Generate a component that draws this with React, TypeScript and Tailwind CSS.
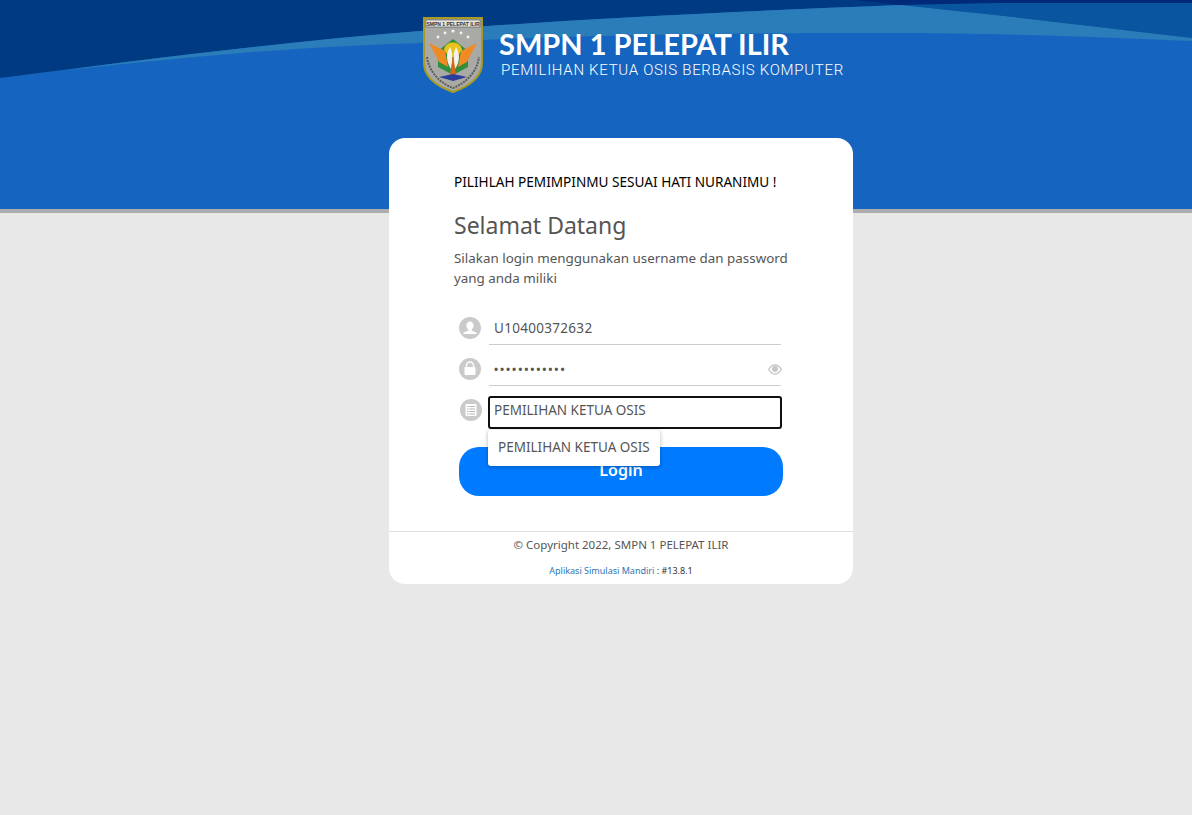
const Logo = () => (
  <svg width="60" height="76" viewBox="0 0 60 76">
    <path d="M1 1H59V46C59 62 44 70 30 75C16 70 1 62 1 46Z" fill="#a9a9a5" stroke="#a89a24" strokeWidth="2" />
    <rect x="3" y="3" width="54" height="7" fill="#e4e4e0" stroke="#3a3a3a" strokeWidth="0.5" />
    <text x="30" y="8.500" textAnchor="middle" fontSize="5" fontWeight="700" fill="#333333" fontFamily="Liberation Sans, sans-serif">SMPN 1 PELEPAT ILIR</text>
    <circle cx="15" cy="20" r="1.400" fill="#f2f2f2" />
    <circle cx="22" cy="16" r="1.400" fill="#f2f2f2" />
    <circle cx="30" cy="14" r="1.600" fill="#f2f2f2" />
    <circle cx="38" cy="16" r="1.400" fill="#f2f2f2" />
    <circle cx="45" cy="20" r="1.400" fill="#f2f2f2" />
    <path d="M15 34L30 22L45 34V50L30 58L15 50Z" fill="#2f8f3c" />
    <path d="M6 26L22 34L25 50L16 45L12 37Z" fill="#f08a24" />
    <path d="M54 26L38 34L35 50L44 45L48 37Z" fill="#f08a24" />
    <path d="M21 33C22 23 38 23 39 33L34 40H26Z" fill="#e8c21c" />
    <path d="M27 30C22 38 24 46 28 52C30 44 30 36 27 30Z" fill="#f6f2ea" />
    <path d="M33 30C38 38 36 46 32 52C30 44 30 36 33 30Z" fill="#f6f2ea" />
    <path d="M30 38L33 58H27Z" fill="#d9661a" />
    <path d="M16 60L30 57L44 60L30 64Z" fill="#2a3f9a" />
    <path d="M4 40C6 55 17 66 30 71C43 66 54 55 56 40" fill="none" stroke="#5c5c58" strokeWidth="2" strokeDasharray="2 1" />
  </svg>
);

const UserBadge = () => (
  <svg width="22" height="22" viewBox="0 0 22 22">
    <circle cx="11" cy="11" r="11" fill="#cacaca" />
    <path d="M11 4.500c-2.200 0-3.600 1.700-3.600 4 0 1.700.8 3.100 1.800 3.800v1.200L5 15.600c-.5.3-.8.7-.9 1.400h13.800c-.1-.7-.4-1.100-.9-1.400l-4.200-2.100v-1.200c1-.7 1.800-2.100 1.800-3.800 0-2.300-1.400-4-3.600-4z" fill="#fff" />
  </svg>
);

const LockBadge = () => (
  <svg width="22" height="22" viewBox="0 0 22 22">
    <circle cx="11" cy="11" r="11" fill="#cacaca" />
    <path d="M7.500 9V7.500a3.500 3.500 0 0 1 7 0V9" fill="none" stroke="#fff" strokeWidth="1.400" />
    <rect x="5.500" y="9" width="11" height="8" rx="1" fill="#fff" />
  </svg>
);

const ListBadge = () => (
  <svg width="22" height="22" viewBox="0 0 22 22">
    <circle cx="11" cy="11" r="11" fill="#cacaca" />
    <rect x="5.500" y="5" width="11" height="12" rx="1" fill="#fff" />
    <path d="M7 7.500h1.500M9.500 7.500h5.500M7 10h1.500M9.500 10h5.500M7 12.500h1.500M9.500 12.500h5.500M7 15h1.500M9.500 15h5.500" stroke="#b5b5b5" strokeWidth="1.200" />
  </svg>
);

const EyeIcon = () => (
  <svg width="14" height="11" viewBox="0 0 14 11" className="-mr-[1px]">
    <path d="M.7 5.500C2.300 2.700 4.500 1 7 1s4.700 1.700 6.300 4.500C11.700 8.300 9.500 10 7 10S2.300 8.300.7 5.500z" fill="#fff" stroke="#c8c8c8" strokeWidth="1.400" />
    <circle cx="7" cy="5" r="3" fill="#c8c8c8" />
  </svg>
);

const App = () => {
  return (
    <div className="min-h-[815px] bg-[#e8e8e8] font-['Noto_Sans','Open_Sans',sans-serif]">
      <header className="relative h-[213px] overflow-hidden border-b-4 border-[#adadb0] bg-[#1565c0]">
        <svg className="absolute inset-0" width="1192" height="209" viewBox="0 0 1192 209">
          <path d="M0 0H1192V40L900 5C720 12 560 20 420 31C280 42 140 60 0 78Z" fill="#003a82" />
          <path d="M855 0H1192V3H1000L900 5Z" fill="#002a78" />
          <path d="M900 5L1000 3H1192V38C1100 27 1000 15 900 5Z" fill="#0a55a0" />
          <path d="M0 78C140 60 280 42 420 31C560 20 720 12 900 5C1000 15 1100 27 1192 38V41C1100 37 1000 33 880 33C700 33 540 36 420 43C280 47 140 61 0 78Z" fill="#2a7db8" />
        </svg>
        <div className="relative flex items-start gap-[16px] pl-[423px] pt-[17px]">
          <Logo />
          <div className="pt-[10px] text-white">
            <div className="font-['Lato',sans-serif] text-[29px] font-bold leading-[34px]">SMPN 1 PELEPAT ILIR</div>
            <div className="mt-[1px] whitespace-nowrap pl-[2px] font-['Roboto',sans-serif] text-[15px] font-light leading-[16px] tracking-[0.700px]">
              PEMILIHAN KETUA OSIS BERBASIS KOMPUTER
            </div>
          </div>
        </div>
      </header>

      <main className="relative -mt-[75px] ml-[389px] w-[464px] rounded-[16px] bg-white">
        <div className="pl-[65px] pr-[60px] pt-[35px]">
          <p className="text-[13.600px] leading-[18px] text-black">PILIHLAH PEMIMPINMU SESUAI HATI NURANIMU !</p>
          <h1 className="mt-[18px] text-[23px] leading-[32px] text-[#555555]">Selamat Datang</h1>
          <p className="mt-[7px] text-[13.400px] leading-[20px] text-[#555555]">
            Silakan login menggunakan username dan password yang anda miliki
          </p>

          <div className="mt-[19px] flex h-[41px] items-start pl-[5px]">
            <div className="pt-[10px]"><UserBadge /></div>
            <div className="ml-[8px] flex h-[38px] w-[292px] items-center border-b border-[#cccccc] pl-[5px] pt-[6px] text-[13.500px] tracking-[0.300px] text-[#555555]">
              U10400372632
            </div>
          </div>
          <div className="flex h-[41px] items-start pl-[5px]">
            <div className="pt-[10px]"><LockBadge /></div>
            <div className="ml-[8px] flex h-[38px] w-[292px] items-center justify-between border-b border-[#cccccc] pl-[5px] pt-[6px] text-[#555555]">
              <span className="text-[11px] font-bold tracking-[1.900px]">••••••••••••</span>
              <EyeIcon />
            </div>
          </div>
          <div className="relative mt-[7px] flex h-[33px] items-start pl-[6px]">
            <div className="mt-[3px]"><ListBadge /></div>
            <div className="ml-[6px] flex h-[33px] w-[294px] items-center rounded-[3px] border-2 border-[#101010] pb-[4px] pl-[4px] text-[13.500px] text-[#555555]">
              PEMILIHAN KETUA OSIS
            </div>
            <div className="absolute left-[34px] top-[34px] z-10 flex h-[36px] w-[172px] items-center rounded-[3px] bg-white pb-[1px] pl-[10px] text-[13.500px] text-[#555555] shadow-[0_1px_4px_rgba(0,0,0,0.3)]">
              PEMILIHAN KETUA OSIS
            </div>
          </div>

          <button className="ml-[5px] mt-[18px] block h-[49px] w-[324px] rounded-[20px] bg-[#007bff] pb-[3px] text-[16px] font-semibold text-white">
            Login
          </button>
        </div>

        <footer className="mt-[35px] h-[53px] rounded-b-[16px] border-t border-[#e0e0e0] text-center">
          <div className="pt-[4px] text-[11.500px] leading-[18px] text-[#555555]">© Copyright 2022, SMPN 1 PELEPAT ILIR</div>
          <div className="mt-[10px] text-[9px] leading-[14px] text-[#2b75b5]">
            Aplikasi Simulasi Mandiri <span className="text-[#333333]">: #13.8.1</span>
          </div>
        </footer>
      </main>
    </div>
  );
};

export default App;
